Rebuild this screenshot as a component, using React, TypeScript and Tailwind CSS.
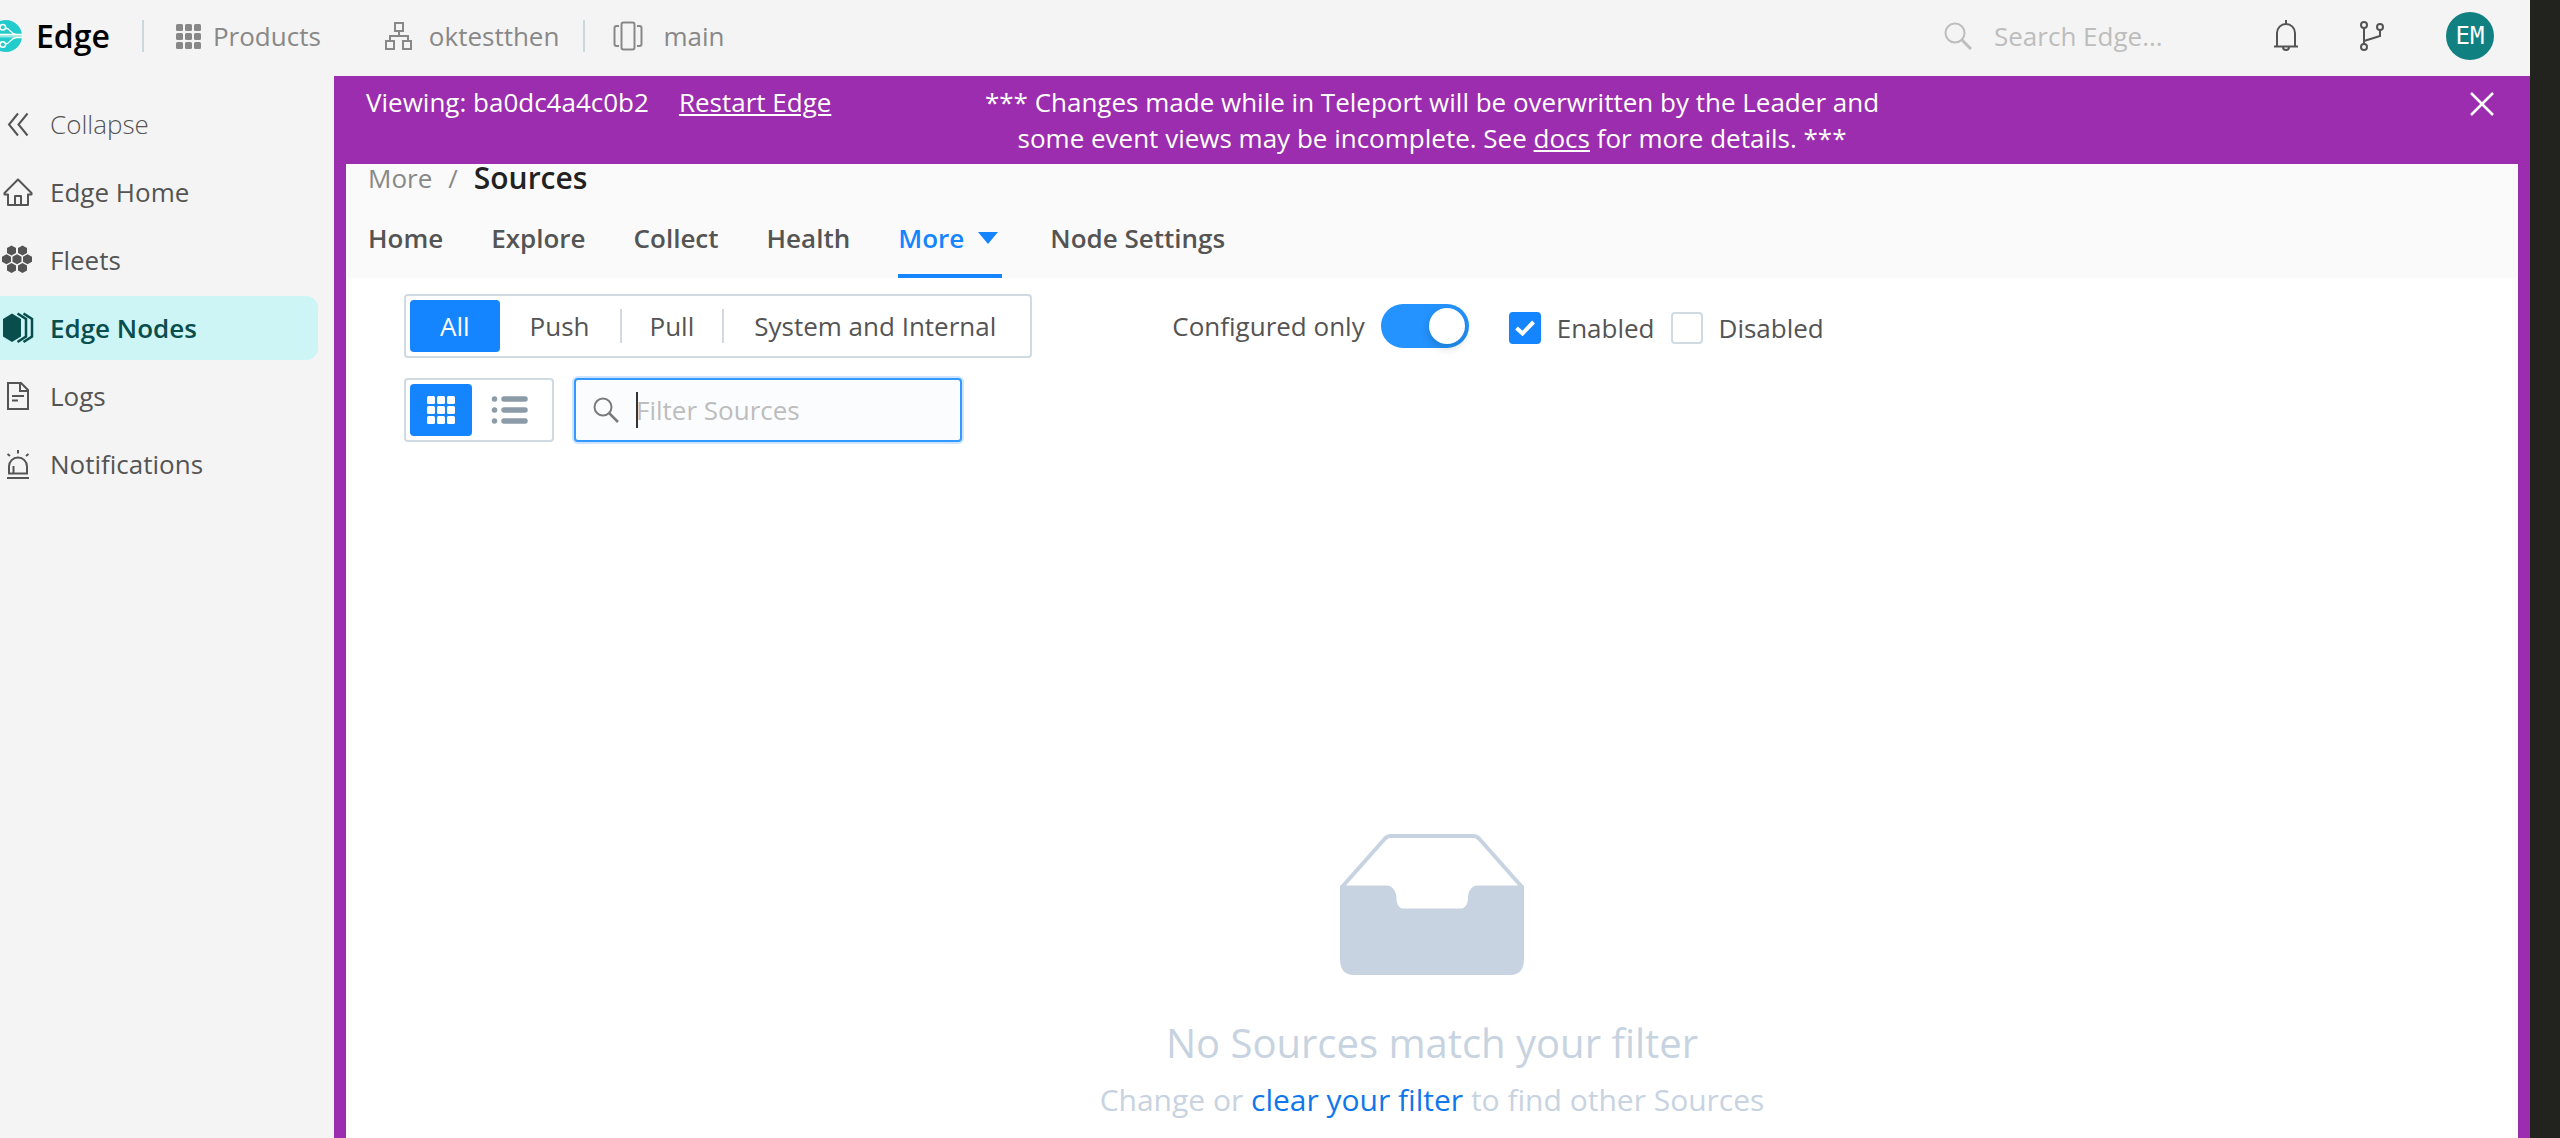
import type { ReactNode } from "react";

function Icon({ w, h, className = "", children }: { w: number; h: number; className?: string; children: ReactNode }) {
  return (
    <svg width={w} height={h} viewBox={`0 0 ${w} ${h}`} fill="none" stroke="currentColor" strokeWidth="2" className={`shrink-0 ${className}`} aria-hidden="true">
      {children}
    </svg>
  );
}

function GridIcon({ size, cell, className = "" }: { size: number; cell: number; className?: string }) {
  const step = (size - cell) / 2;
  return (
    <Icon w={size} h={size} className={className}>
      {[0, 1, 2].flatMap((r) =>
        [0, 1, 2].map((c) => (
          <rect key={`${r}${c}`} x={c * step} y={r * step} width={cell} height={cell} rx="1.5" fill="currentColor" stroke="none" />
        ))
      )}
    </Icon>
  );
}

const hex = (cx: number, cy: number) =>
  `M${cx} ${cy - 5}L${cx + 4.5} ${cy - 2.5}V${cy + 2.5}L${cx} ${cy + 5}L${cx - 4.5} ${cy + 2.5}V${cy - 2.5}Z`;

const icons = {
  collapse: (
    <Icon w={36} h={36}>
      <path d="M18 7.5L9 18.5L18 29.5M27.5 7.5L18.5 18.5L27.5 29.5" />
    </Icon>
  ),
  home: (
    <Icon w={36} h={36}>
      <path d="M4.5 19L18 5.5L31.500 19V20.5H28V31H8V20.5H4.5ZM15 31V22H21V31" strokeLinejoin="round" />
    </Icon>
  ),
  fleets: (
    <Icon w={36} h={36}>
      {[[11.5, 8.5], [22.5, 8.5], [6.5, 17.2], [17, 17.2], [27.5, 17.2], [11.5, 26], [22.5, 26]].map(([x, y]) => (
        <path key={`${x}-${y}`} d={hex(x, y)} fill="currentColor" stroke="none" />
      ))}
    </Icon>
  ),
  nodes: (
    <Icon w={36} h={36}>
      <path d="M12 3.5L21 9V26.5L12 32L3 26.5V9Z" fill="currentColor" stroke="none" />
      <path d="M17.5 3.5L26 9V26.5L17.5 32M23.5 3.5L32 9V26.5L23.5 32" strokeWidth="2.5" />
    </Icon>
  ),
  logs: (
    <Icon w={36} h={36}>
      <path d="M8 5H21L28 12V31H8ZM20 5V13H28M12 18H24M12 22.5H18" />
    </Icon>
  ),
  notifications: (
    <Icon w={36} h={36}>
      <path d="M9 27.5V20.5a9 9 0 0 1 18 0V27.5ZM7 32H29M18 4V7.5M7.5 8L10 10M28.5 8L26 10M13.500 20V27" />
    </Icon>
  ),
};

const navItems: { label: string; icon: ReactNode; cls: string }[] = [
  { label: "Collapse", icon: icons.collapse, cls: "font-light text-[#545454]" },
  { label: "Edge Home", icon: icons.home, cls: "text-[#545454]" },
  { label: "Fleets", icon: icons.fleets, cls: "text-[#545454]" },
  { label: "Edge Nodes", icon: icons.nodes, cls: "bg-[#cdf5f5] font-semibold text-[#0a4d4d]" },
  { label: "Logs", icon: icons.logs, cls: "text-[#545454]" },
  { label: "Notifications", icon: icons.notifications, cls: "text-[#545454]" },
];

function TopBar() {
  return (
    <header className="flex h-[76px] items-center bg-[#f4f4f4] pr-9 pb-1 text-[#888888]">
      <div className="-ml-2.5 flex items-center gap-3.5 text-black">
        <svg width="32" height="32" viewBox="0 0 32 32" fill="none" stroke="#fff" strokeWidth="1.5" className="shrink-0" aria-hidden="true">
          <circle cx="16" cy="16" r="16" fill="#22cccc" stroke="none" />
          <rect x="0" y="14.5" width="32" height="3" fill="#fff" fillOpacity="0.5" stroke="none" />
          <path d="M0 14.500H9L12 14.500M15.500 8C21 8.500 20 14 26.500 14.500H32M15.500 24C21 23.500 20 18 26.500 17.500H32M0 14.500H32" strokeWidth="1.3" />
          <circle cx="12.800" cy="7.300" r="2.800" />
          <circle cx="12.800" cy="24.500" r="2.800" />
        </svg>
        <span className="text-[32px] leading-10 font-semibold">Edge</span>
      </div>
      <div className="ml-8 h-8 w-0.5 bg-[#cbd8e0]" />
      <button className="ml-8 flex items-center gap-3">
        <GridIcon size={25} cell={7} />
        Products
      </button>
      <button className="ml-16 flex items-center gap-4">
        <Icon w={28} h={28}>
          <path d="M10 1H18V9H10ZM14 9V14M5 19V14H23V19M1 19H9V27H1ZM18 19H26V27H18Z" />
        </Icon>
        oktestthen
      </button>
      <div className="ml-6 h-8 w-0.5 bg-[#cbd8e0]" />
      <button className="ml-7 flex items-center gap-5">
        <Icon w={30} h={30}>
          <rect x="8.5" y="1.5" width="13" height="27" rx="2" />
          <path d="M6 5H3.5a2 2 0 0 0-2 2V23a2 2 0 0 0 2 2H6M24 5H26.5a2 2 0 0 1 2 2V23a2 2 0 0 1-2 2H24" />
        </Icon>
        main
      </button>
      <label className="ml-auto flex items-center gap-[22px] text-[#bdbdbd]">
        <Icon w={28} h={28}>
          <circle cx="11" cy="11" r="9.500" />
          <path d="M17.5 17.5L27 27" strokeWidth="3" />
        </Icon>
        <input aria-label="Search Edge" placeholder="Search Edge..." className="w-[280px] bg-transparent outline-none placeholder:text-[#bdbdbd]" />
      </label>
      <button aria-label="Notifications" className="text-[#545454]">
        <Icon w={24} h={32}>
          <path d="M3 26V13a9 9 0 0 1 18 0V26M0 26.5H24M9 27a3 3 0 0 0 6 0M12 0V4" />
        </Icon>
      </button>
      <button aria-label="Version control" className="ml-[62px] text-[#545454]">
        <Icon w={24} h={32}>
          <circle cx="4" cy="5" r="3" />
          <circle cx="20" cy="7" r="3" />
          <circle cx="4" cy="27" r="3" />
          <path d="M4 8V24M20 10V16L4 21" />
        </Icon>
      </button>
      <button className="ml-[62px] size-12 rounded-full bg-[#108080] font-['DejaVu_Sans_Mono',monospace] text-2xl text-white">EM</button>
    </header>
  );
}

function Sidebar() {
  return (
    <nav className="w-[334px] shrink-0 bg-[#f4f4f4] pt-4 pr-4">
      <ul className="flex flex-col gap-1">
        {navItems.map((n) => (
          <li key={n.label}>
            <a href="#" className={`flex h-16 items-center gap-3.5 rounded-r-xl ${n.cls}`}>
              {n.icon}
              {n.label}
            </a>
          </li>
        ))}
      </ul>
    </nav>
  );
}

function Banner() {
  return (
    <div className="grid h-[88px] grid-cols-[1fr_auto_1fr] items-start bg-[#9b2dae] px-5 pt-2 leading-9 text-white">
      <div className="flex gap-[30px] pl-3">
        <span>Viewing: ba0dc4a4c0b2</span>
        <a href="#" className="underline decoration-2 underline-offset-2">Restart Edge</a>
      </div>
      <p className="text-center">
        *** Changes made while in Teleport will be overwritten by the Leader and
        <br />
        some event views may be incomplete. See <a href="#" className="underline decoration-2 underline-offset-2">docs</a> for more details. ***
      </p>
      <button aria-label="Close" className="mt-2 mr-4 justify-self-end">
        <Icon w={24} h={24}>
          <path d="M1 1L23 23M23 1L1 23" strokeWidth="2.5" />
        </Icon>
      </button>
    </div>
  );
}

function PageHeader() {
  return (
    <div className="h-[114px] bg-[#fafafa] pl-[22px]">
      <div className="flex h-7 items-center gap-4 leading-7 text-[#888888]">
        <a href="#">More</a>
        <span>/</span>
        <h1 className="text-[30px] font-semibold text-[#222222]">Sources</h1>
      </div>
      <nav className="mt-5 flex h-[66px] gap-12 font-semibold text-[#545454]">
        {["Home", "Explore", "Collect", "Health"].map((t) => (
          <a key={t} href="#" className="pt-2">{t}</a>
        ))}
        <a href="#" className="flex gap-3.5 border-b-4 border-[#1484ff] pt-2 pr-1 text-[#1484ff]">
          More
          <svg width="20" height="12" viewBox="0 0 20 12" fill="currentColor" className="mt-3" aria-hidden="true">
            <path d="M0 0H20L10 12Z" />
          </svg>
        </a>
        <a href="#" className="pt-2">Node Settings</a>
      </nav>
    </div>
  );
}

function Filters() {
  return (
    <div className="px-[58px] pt-4 text-[#545454]">
      <div className="flex items-center">
        <div className="flex h-16 items-center rounded border-2 border-[#cfdae2] p-1">
          <button className="h-[52px] rounded bg-[#1484ff] px-[30px] text-white">All</button>
          <button className="px-[30px]">Push</button>
          <div className="h-[34px] w-0.5 bg-[#cfdae2]" />
          <button className="px-7">Pull</button>
          <div className="h-[34px] w-0.5 bg-[#cfdae2]" />
          <button className="px-[30px]">System and Internal</button>
        </div>
        <label htmlFor="configured" className="ml-[140px]">Configured only</label>
        <button id="configured" role="switch" aria-checked="true" className="ml-4 flex h-11 w-[88px] items-center justify-end rounded-full bg-[#2492ff] p-1">
          <span className="size-9 rounded-full bg-white shadow-[0_4px_8px_rgba(0,35,11,0.2)]" />
        </button>
        <div className="ml-10 flex gap-4 pt-1">
          <label className="flex items-center gap-4">
            <span className="relative flex">
              <input type="checkbox" defaultChecked className="size-8 appearance-none rounded border-2 border-[#cfdae2] checked:border-[#1484ff] checked:bg-[#1484ff]" />
              <svg width="20" height="16" viewBox="0 0 20 16" fill="none" stroke="#fff" strokeWidth="4" className="pointer-events-none absolute top-2 left-1.5" aria-hidden="true">
                <path d="M1.5 8L7.5 13.5L18.5 2" />
              </svg>
            </span>
            Enabled
          </label>
          <label className="flex items-center gap-4">
            <input type="checkbox" className="size-8 appearance-none rounded border-2 border-[#cfdae2]" />
            Disabled
          </label>
        </div>
      </div>
      <div className="mt-5 flex items-center gap-5">
        <div className="flex h-16 w-[150px] rounded border-2 border-[#cfdae2] p-1">
          <button aria-label="Grid view" className="flex w-[62px] items-center justify-center rounded bg-[#1484ff] text-white">
            <GridIcon size={28} cell={8} />
          </button>
          <button aria-label="List view" className="flex flex-1 items-center justify-center text-[#8c9ba8]">
            <Icon w={38} h={30}>
              <path d="M13 4H34M13 15H34M13 26H34M3.500 4h.01M3.500 15h.01M3.500 26h.01" strokeWidth="5.500" strokeLinecap="round" />
            </Icon>
          </button>
        </div>
        <label className="flex h-16 w-[388px] items-center rounded border-2 border-[#3399ff] bg-[#fbfcfe] px-4 shadow-[0_0_0_2px_#cfe5ff]">
          <Icon w={28} h={28} className="text-[#7a7a7a]">
            <circle cx="11" cy="11" r="8.500" />
            <path d="M17 17L26 26" strokeWidth="2.500" />
          </Icon>
          <span className="-mr-0.5 ml-4 h-9 w-0.5 bg-[#333333]" />
          <input aria-label="Filter Sources" placeholder="Filter Sources" className="min-w-0 flex-1 bg-transparent outline-none placeholder:text-[#bdbdbd]" />
        </label>
      </div>
    </div>
  );
}

function EmptyState() {
  return (
    <div className="mt-[392px] flex flex-col items-center text-[#c7d3e0]">
      <svg width="184" height="142" viewBox="0 0 184 142" aria-hidden="true">
        <path d="M2 53L45 4.5Q47.5 2 50 2H134Q136.5 2 139 4.5L182 53" fill="none" stroke="currentColor" strokeWidth="4" />
        <path d="M0 51.5H46C53 51.5 56.5 58 56.5 64C56.5 70 59 74.5 63 74.5H121C125 74.5 128 70 128 64C128 58 131 51.5 138 51.5H184V125Q184 141 170 141H14Q0 141 0 125Z" fill="currentColor" />
      </svg>
      <h2 className="mt-10 text-[40px] leading-[54px]">No Sources match your filter</h2>
      <p className="mt-2.5 text-[30px] leading-10">
        Change or <a href="#" className="text-[#1077ea]">clear your filter</a> to find other Sources
      </p>
    </div>
  );
}

export default function App() {
  return (
    <div className="flex h-screen overflow-hidden bg-[#22231e] pr-[30px] font-['Open_Sans',sans-serif] text-[26px] leading-9">
      <div className="flex min-w-0 flex-1 flex-col">
        <TopBar />
        <div className="flex min-h-0 flex-1">
          <Sidebar />
          <main className="flex min-w-0 flex-1 flex-col bg-[#9b2dae]">
            <Banner />
            <div className="mx-3 min-h-0 flex-1 bg-white">
              <PageHeader />
              <Filters />
              <EmptyState />
            </div>
          </main>
        </div>
      </div>
    </div>
  );
}
